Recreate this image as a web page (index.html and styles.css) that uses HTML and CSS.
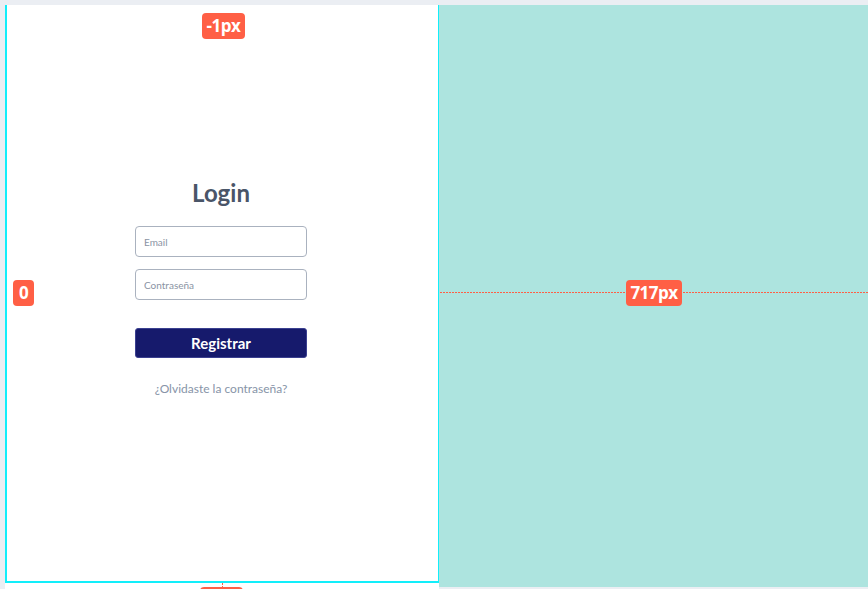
FILE: index.html
```html
<!DOCTYPE html>
<html lang="es">
<head>
<meta charset="utf-8">
<title>Login</title>
<link rel="stylesheet" href="styles.css">
</head>
<body>
<div class="stage">
  <section class="panel">
    <form class="login">
      <h1 class="title">Login</h1>
      <input class="field" type="email" placeholder="Email">
      <input class="field field-second" type="password" placeholder="Contraseña">
      <button class="btn" type="button">Registrar</button>
      <a class="forgot" href="#">¿Olvidaste la contraseña?</a>
    </form>
    <div class="select-box"></div>
    <span class="badge badge-top">-1px</span>
    <span class="badge badge-left">0</span>
    <span class="badge badge-bottom">-1px</span>
    <span class="tick"></span>
  </section>
  <section class="side">
    <span class="measure-line"></span>
    <span class="badge badge-right">717px</span>
  </section>
</div>
</body>
</html>
```

FILE: styles.css
```css
html, body {
  margin: 0;
  padding: 0;
  height: 100%;
  overflow: hidden;
}
body {
  background: #ebeef3;
  font-family: Lato, "Open Sans", sans-serif;
}
.stage {
  display: flex;
  padding: 5px 0 0 5px;
  height: 584px;
}
.panel {
  position: relative;
  box-sizing: border-box;
  width: 434px;
  padding-right: 2px;
  background: #ffffff;
  display: flex;
  flex-direction: column;
  align-items: center;
}
.login {
  display: flex;
  flex-direction: column;
  align-items: center;
  width: 172px;
  padding-top: 173px;
}
.title {
  margin: 0;
  font-size: 24px;
  line-height: 30px;
  font-weight: 700;
  color: #4a5568;
}
.field {
  box-sizing: border-box;
  width: 172px;
  height: 31px;
  margin-top: 18px;
  padding: 0 8px;
  border: 1px solid #aab2bf;
  border-radius: 4px;
  font-family: Lato, sans-serif;
  font-size: 10px;
  color: #4a5568;
  background: #fff;
  outline: none;
}
.field::placeholder {
  color: #8a93a3;
}
.field-second {
  margin-top: 12px;
}
.btn {
  width: 172px;
  height: 30px;
  margin-top: 28px;
  border: 1px solid #3b4090;
  border-radius: 3px;
  background: #161a6c;
  color: #ffffff;
  font-family: Lato, sans-serif;
  font-weight: 700;
  font-size: 15px;
  padding: 0;
}
.forgot {
  margin-top: 23px;
  font-size: 12px;
  line-height: 16px;
  color: #8794a8;
  text-decoration: none;
}
.select-box {
  position: absolute;
  left: 0;
  top: 0;
  width: 431px;
  height: 576px;
  border-left: 2px solid #12eefa;
  border-right: 1px solid #12eefa;
  border-bottom: 2px solid #12eefa;
  pointer-events: none;
}
.badge {
  position: absolute;
  background: #ff5f45;
  color: #ffffff;
  font-family: "Open Sans", sans-serif;
  font-weight: 700;
  font-size: 17px;
  line-height: 26px;
  letter-spacing: -0.5px;
  border-radius: 4px;
  padding: 0 4px;
  text-align: center;
}
.badge-top {
  left: 197px;
  top: 8px;
  width: 35px;
}
.badge-left {
  left: 8px;
  top: 275px;
  width: 13px;
}
.badge-bottom {
  left: 195px;
  top: 582px;
  width: 35px;
}
.tick {
  position: absolute;
  left: 217px;
  top: 578px;
  width: 1px;
  height: 5px;
  background: repeating-linear-gradient(to bottom, #ff5f45 0 2px, transparent 2px 3px);
}
.side {
  position: relative;
  flex: 1;
  background: #ade4df;
  height: 582px;
}
.measure-line {
  position: absolute;
  left: 1px;
  right: 0;
  top: 287px;
  height: 1px;
  background: repeating-linear-gradient(to right, #ff5f45 0 2px, transparent 2px 3px);
}
.badge-right {
  left: 187px;
  top: 275px;
  width: 48px;
}
```
